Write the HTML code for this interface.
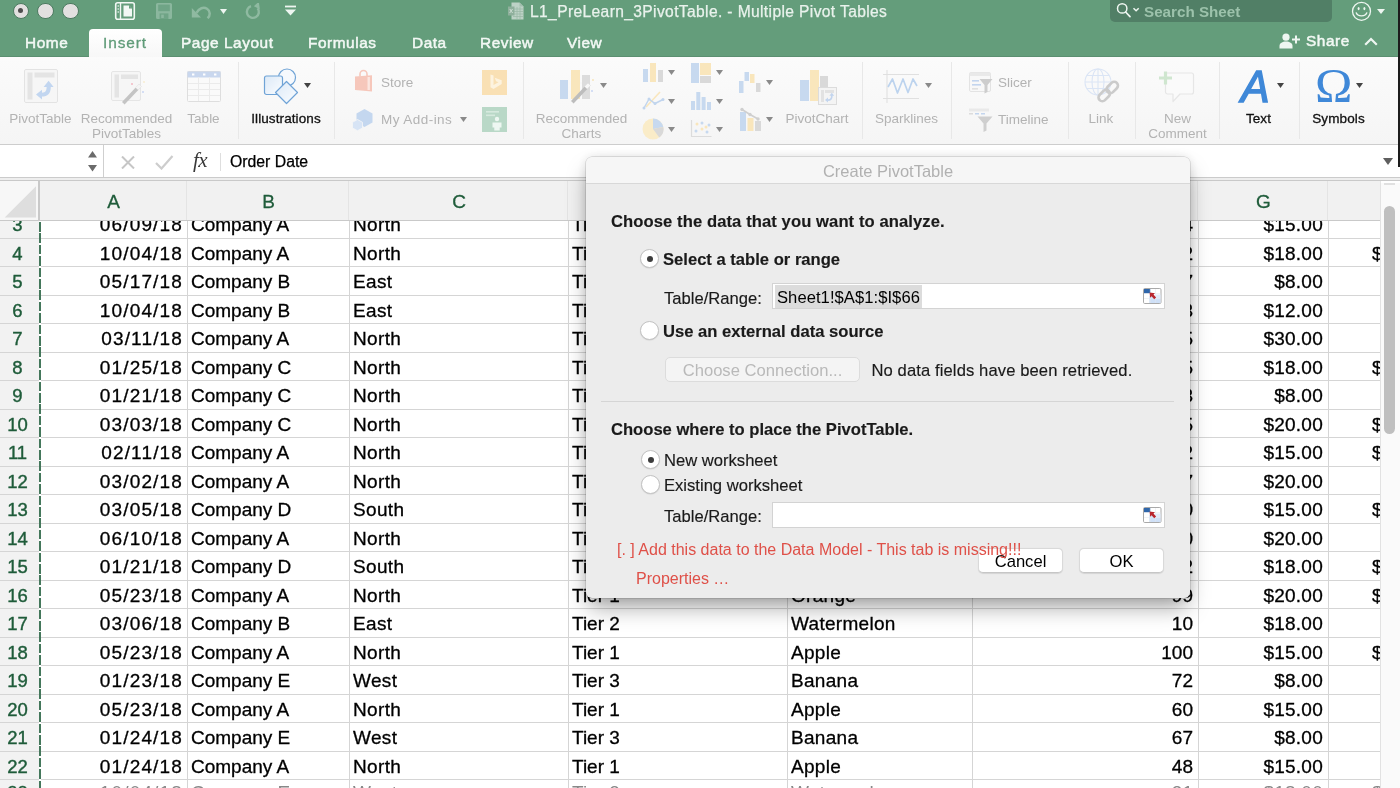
<!DOCTYPE html>
<html lang="en">
<head>
<meta charset="utf-8">
<title>L1_PreLearn_3PivotTable. - Multiple Pivot Tables</title>
<style>
*{box-sizing:border-box;margin:0;padding:0}
html,body{width:1400px;height:788px;overflow:hidden;background:#fff}
#grid,#colhdr,#top,#ribbon,#fbar,#dlg{will-change:transform}
body{position:relative;font-family:"Liberation Sans",sans-serif;color:#000}
.abs{position:absolute}
/* ---------- grid ---------- */
#grid{position:absolute;left:0;top:0;width:1400px;height:788px;overflow:hidden;background:#fff}
.row{position:absolute;left:0;width:1381px;height:28.5px;border-bottom:1px solid #d5d5d5;font-size:19px;line-height:30px;white-space:nowrap;-webkit-text-stroke:.3px #000}
.row span{position:absolute;top:0;height:28px}
.rn{left:0;width:35px;text-align:center;color:#1f5c3a;font-size:18.5px;height:28.5px!important;-webkit-text-stroke:.4px #1f5c3a}
.c{padding:0 4px;overflow:hidden}
.r{text-align:right}
.ca{left:39px;width:148px;letter-spacing:1.15px}
.cb{left:187px;width:162px}
.cc{left:349px;width:219px;letter-spacing:.35px}
.cd{left:568px;width:219px}
.ce{left:787px;width:185px;letter-spacing:.3px}
.cf{left:972px;width:226px;padding-right:5px}
.cg{left:1198px;width:130px;padding-right:5px;letter-spacing:.25px}
.ch{left:1328px;width:53px;text-align:left;padding-left:44px}
.vl{position:absolute;top:221px;width:1px;height:567px;background:#d5d5d5}
#rowhdr{position:absolute;left:0;top:221px;width:39px;height:567px;background:#f2f2f2}
#ants{position:absolute;left:39.2px;top:222px;width:1.7px;height:567px;background:repeating-linear-gradient(180deg,#44775b 0 9.6px,#fff 9.6px 11.4px)}
/* ---------- column header ---------- */
#colhdr{position:absolute;left:0;top:180px;width:1381px;height:41px;background:#f1f1f1;border-bottom:1px solid #c9c9c9}
#colhdr span{position:absolute;top:0;height:40px;line-height:43px;text-align:center;font-size:19px;color:#1f5c3a;border-right:1px solid #e4e4e4;-webkit-text-stroke:.3px #1f5c3a;padding-left:2px}
#corner{position:absolute;left:0;top:181px;width:38px;height:39px;background:#f7f7f7}
#cornerline{position:absolute;left:38px;top:180px;width:1.5px;height:41px;background:#c9c9c9}

/* ---------- top chrome ---------- */
#top{position:absolute;left:0;top:0;width:1400px;height:57px;background:#649d7b;border-bottom:1px solid #5b8f71}
.tl{position:absolute;top:2.8px;width:16.5px;height:16.5px;border-radius:50%;background:#e2e0e0;border:1.2px solid #4c7a60}
.tl i{position:absolute;left:4.45px;top:4.45px;width:5.2px;height:5.2px;border-radius:50%;background:#4d4d4d}
#title{position:absolute;left:530px;top:2px;font-size:15.6px;line-height:20px;color:#e9f2ec;white-space:nowrap;letter-spacing:.37px;-webkit-text-stroke:.25px #e9f2ec}
#search{position:absolute;left:1110px;top:-4px;width:222px;height:26px;border-radius:5px;background:#517f66}
#search span{position:absolute;left:34px;top:6px;font-size:15.200px;line-height:20px;font-weight:700;color:#9cc2ab;white-space:nowrap}
#tabIns{position:absolute;left:89px;top:29px;width:73px;height:29px;border-radius:4px 4px 0 0;background:linear-gradient(#fff,#f7f7f7)}
.tab{position:absolute;top:31.5px;font-size:15.4px;line-height:22px;color:#f2f8f4;white-space:nowrap;-webkit-text-stroke:.5px #f2f8f4;letter-spacing:.55px}
#edge{z-index:5;position:absolute;left:1397.5px;top:0;width:2.5px;height:167px;background:#1c1c1c}
/* ---------- ribbon ---------- */
#ribbon{position:absolute;left:0;top:57px;width:1400px;height:88px;background:linear-gradient(#fbfbfb,#f5f5f5);border-bottom:1.500px solid #cdcdcd}
.sep{position:absolute;top:5px;width:1px;height:77px;background:#e8e8e8}
.lbl{position:absolute;margin-top:1px;font-size:13.500px;line-height:15px;color:#b3b3b3;text-align:center;white-space:nowrap;font-style:normal}
.lbl.l{text-align:left}
.lbl.on{color:#111;-webkit-text-stroke:.3px #111;font-size:13.5px;letter-spacing:.1px}
#bigA{left:1241px;top:5px;font:italic 400 45px/50px "Liberation Sans",sans-serif;color:#3f88d8;-webkit-text-stroke:1.5px #3f88d8;transform:scaleX(.95);transform-origin:0 0}
#omega{left:1315px;top:3.5px;font:400 47.5px/50px "Liberation Serif",serif;color:#3f88d8;transform:scaleX(1.06);transform-origin:0 0}
/* ---------- formula bar ---------- */
#fbar{position:absolute;left:0;top:145px;width:1400px;height:32.5px;background:#fff}
#fx{position:absolute;left:193px;top:3px;font:italic 400 21px/24px "Liberation Serif",serif;color:#3a3a3a;letter-spacing:-.5px}
#fval{position:absolute;left:230px;top:7px;font-size:15.800px;line-height:20px;white-space:nowrap;-webkit-text-stroke:.25px #000}
#fline{position:absolute;left:0;top:177px;width:1400px;height:4px;background:#eee;border-top:1.5px solid #cbcbcb;border-bottom:1px solid #c9c9c9}
/* ---------- dialog ---------- */
#dlg{position:absolute;left:586px;top:157px;width:604px;height:441px;border-radius:6px;background:#ececec;box-shadow:0 0 0 .5px rgba(0,0,0,.2),0 12px 22px -3px rgba(0,0,0,.36),0 0 11px rgba(0,0,0,.11);font-size:16.600px}
#dtitle{position:absolute;left:0;top:0;width:604px;height:27px;border-radius:6px 6px 0 0;background:#f6f6f6;border-bottom:1px solid #d8d8d8;text-align:center;line-height:28px;font-size:16.500px;color:#b1b1b1;padding-left:0}
.dt{position:absolute;margin-top:.8px;line-height:22px;white-space:nowrap;color:#1a1a1a;-webkit-text-stroke:.15px #1a1a1a}
.dt.b{font-weight:700}
.radio{position:absolute;width:19px;height:19px;border-radius:50%;background:#fff;border:1px solid #c3c3c3;box-shadow:0 .5px 1px rgba(0,0,0,.12)}
.radio b{position:absolute;left:5.500px;top:5.500px;width:6px;height:6px;border-radius:50%;background:#3c3c3c}
.inp{position:absolute;width:393px;height:26px;background:#fff;border:1px solid #d3d3d3;line-height:24px;white-space:nowrap}
.inp .sel{position:absolute;left:2px;top:1px;height:23px;line-height:25px;padding:0 2px;background:#dcdcdc;letter-spacing:.05px}
.ric{position:absolute;right:2.5px;top:4px}
.btn{position:absolute;height:24.5px;border-radius:5px;background:#fff;border:1px solid #d9d9d9;border-bottom-color:#c6c6c6;text-align:center;line-height:25.5px;white-space:nowrap;box-shadow:0 .5px 1px rgba(0,0,0,.1)}
.btn.dis{background:#f4f4f4;color:#b9b9b9;border-color:#dcdcdc;box-shadow:none}
.red{position:absolute;font-size:16px;line-height:20px;color:#df5048;white-space:nowrap}
#vscroll{position:absolute;left:1380px;top:183px;width:20px;height:605px;background:#fafafa;border-left:1px solid #e2e2e2}
#vscroll i{position:absolute;left:3px;top:23px;width:11px;height:228px;border-radius:6px;background:#bfbfbf}
#vscroll b{position:absolute;left:3px;top:0;width:11px;height:2px;background:#e0e0e0}
</style>
</head>
<body>
<div id="grid">
<div id="rowhdr"></div>

<div class="row" style="top:210.0px"><span class="rn">3</span><span class="c ca r">06/09/18</span><span class="c cb">Company A</span><span class="c cc">North</span><span class="c cd">Tier 1</span><span class="c ce">Apple</span><span class="c cf r">24</span><span class="c cg r">$15.00</span><span class="c ch r2"></span></div>
<div class="row" style="top:238.5px"><span class="rn">4</span><span class="c ca r">10/04/18</span><span class="c cb">Company A</span><span class="c cc">North</span><span class="c cd">Tier 1</span><span class="c ce">Orange</span><span class="c cf r">82</span><span class="c cg r">$18.00</span><span class="c ch r2">$</span></div>
<div class="row" style="top:267.0px"><span class="rn">5</span><span class="c ca r">05/17/18</span><span class="c cb">Company B</span><span class="c cc">East</span><span class="c cd">Tier 2</span><span class="c ce">Banana</span><span class="c cf r">37</span><span class="c cg r">$8.00</span><span class="c ch r2"></span></div>
<div class="row" style="top:295.5px"><span class="rn">6</span><span class="c ca r">10/04/18</span><span class="c cb">Company B</span><span class="c cc">East</span><span class="c cd">Tier 2</span><span class="c ce">Mango</span><span class="c cf r">43</span><span class="c cg r">$12.00</span><span class="c ch r2"></span></div>
<div class="row" style="top:324.0px"><span class="rn">7</span><span class="c ca r">03/11/18</span><span class="c cb">Company A</span><span class="c cc">North</span><span class="c cd">Tier 1</span><span class="c ce">Cherry</span><span class="c cf r">25</span><span class="c cg r">$30.00</span><span class="c ch r2"></span></div>
<div class="row" style="top:352.5px"><span class="rn">8</span><span class="c ca r">01/25/18</span><span class="c cb">Company C</span><span class="c cc">North</span><span class="c cd">Tier 1</span><span class="c ce">Orange</span><span class="c cf r">95</span><span class="c cg r">$18.00</span><span class="c ch r2">$</span></div>
<div class="row" style="top:381.0px"><span class="rn">9</span><span class="c ca r">01/21/18</span><span class="c cb">Company C</span><span class="c cc">North</span><span class="c cd">Tier 1</span><span class="c ce">Banana</span><span class="c cf r">83</span><span class="c cg r">$8.00</span><span class="c ch r2"></span></div>
<div class="row" style="top:409.5px"><span class="rn">10</span><span class="c ca r">03/03/18</span><span class="c cb">Company C</span><span class="c cc">North</span><span class="c cd">Tier 1</span><span class="c ce">Orange</span><span class="c cf r">55</span><span class="c cg r">$20.00</span><span class="c ch r2">$</span></div>
<div class="row" style="top:438.0px"><span class="rn">11</span><span class="c ca r">02/11/18</span><span class="c cb">Company A</span><span class="c cc">North</span><span class="c cd">Tier 1</span><span class="c ce">Apple</span><span class="c cf r">92</span><span class="c cg r">$15.00</span><span class="c ch r2">$</span></div>
<div class="row" style="top:466.5px"><span class="rn">12</span><span class="c ca r">03/02/18</span><span class="c cb">Company A</span><span class="c cc">North</span><span class="c cd">Tier 1</span><span class="c ce">Orange</span><span class="c cf r">27</span><span class="c cg r">$20.00</span><span class="c ch r2"></span></div>
<div class="row" style="top:495.0px"><span class="rn">13</span><span class="c ca r">03/05/18</span><span class="c cb">Company D</span><span class="c cc">South</span><span class="c cd">Tier 3</span><span class="c ce">Apple</span><span class="c cf r">90</span><span class="c cg r">$15.00</span><span class="c ch r2">$</span></div>
<div class="row" style="top:523.5px"><span class="rn">14</span><span class="c ca r">06/10/18</span><span class="c cb">Company A</span><span class="c cc">North</span><span class="c cd">Tier 1</span><span class="c ce">Orange</span><span class="c cf r">40</span><span class="c cg r">$20.00</span><span class="c ch r2"></span></div>
<div class="row" style="top:552.0px"><span class="rn">15</span><span class="c ca r">01/21/18</span><span class="c cb">Company D</span><span class="c cc">South</span><span class="c cd">Tier 3</span><span class="c ce">Watermelon</span><span class="c cf r">82</span><span class="c cg r">$18.00</span><span class="c ch r2">$</span></div>
<div class="row" style="top:580.5px"><span class="rn">16</span><span class="c ca r">05/23/18</span><span class="c cb">Company A</span><span class="c cc">North</span><span class="c cd">Tier 1</span><span class="c ce">Orange</span><span class="c cf r">99</span><span class="c cg r">$20.00</span><span class="c ch r2">$</span></div>
<div class="row" style="top:609.0px"><span class="rn">17</span><span class="c ca r">03/06/18</span><span class="c cb">Company B</span><span class="c cc">East</span><span class="c cd">Tier 2</span><span class="c ce">Watermelon</span><span class="c cf r">10</span><span class="c cg r">$18.00</span><span class="c ch r2"></span></div>
<div class="row" style="top:637.5px"><span class="rn">18</span><span class="c ca r">05/23/18</span><span class="c cb">Company A</span><span class="c cc">North</span><span class="c cd">Tier 1</span><span class="c ce">Apple</span><span class="c cf r">100</span><span class="c cg r">$15.00</span><span class="c ch r2">$</span></div>
<div class="row" style="top:666.0px"><span class="rn">19</span><span class="c ca r">01/23/18</span><span class="c cb">Company E</span><span class="c cc">West</span><span class="c cd">Tier 3</span><span class="c ce">Banana</span><span class="c cf r">72</span><span class="c cg r">$8.00</span><span class="c ch r2"></span></div>
<div class="row" style="top:694.5px"><span class="rn">20</span><span class="c ca r">05/23/18</span><span class="c cb">Company A</span><span class="c cc">North</span><span class="c cd">Tier 1</span><span class="c ce">Apple</span><span class="c cf r">60</span><span class="c cg r">$15.00</span><span class="c ch r2"></span></div>
<div class="row" style="top:723.0px"><span class="rn">21</span><span class="c ca r">01/24/18</span><span class="c cb">Company E</span><span class="c cc">West</span><span class="c cd">Tier 3</span><span class="c ce">Banana</span><span class="c cf r">67</span><span class="c cg r">$8.00</span><span class="c ch r2"></span></div>
<div class="row" style="top:751.5px"><span class="rn">22</span><span class="c ca r">01/24/18</span><span class="c cb">Company A</span><span class="c cc">North</span><span class="c cd">Tier 1</span><span class="c ce">Apple</span><span class="c cf r">48</span><span class="c cg r">$15.00</span><span class="c ch r2"></span></div>
<div class="row" style="top:780.0px;line-height:26.5px;color:#888;-webkit-text-stroke:0"><span class="rn">23</span><span class="c ca r">10/04/18</span><span class="c cb">Company E</span><span class="c cc">West</span><span class="c cd">Tier 3</span><span class="c ce">Watermelon</span><span class="c cf r">31</span><span class="c cg r">$18.00</span><span class="c ch r2">$</span></div>
<div class="vl" style="left:187px"></div>
<div class="vl" style="left:349px"></div>
<div class="vl" style="left:568px"></div>
<div class="vl" style="left:787px"></div>
<div class="vl" style="left:972px"></div>
<div class="vl" style="left:1197.5px"></div>
<div class="vl" style="left:1327.5px"></div>
<div id="ants"></div>
</div>
<div id="colhdr">

<span style="left:39px;width:148px">A</span>
<span style="left:187px;width:162px">B</span>
<span style="left:349px;width:219px">C</span>
<span style="left:568px;width:219px">D</span>
<span style="left:787px;width:185px">E</span>
<span style="left:972px;width:226px">F</span>
<span style="left:1198px;width:130px">G</span>
<span style="left:1328px;width:53px"></span>
</div>
<div id="vscroll"><b></b><i></i></div>
<div id="corner"><svg class="abs" style="left:0;top:0" width="38" height="39" viewBox="0 0 38 39"><path d="M36 5.300v31.300h-31.300z" fill="#dedede"/></svg></div><div id="cornerline"></div>
<!-- ================= window chrome ================= -->
<div id="top">
  <div class="tl" style="left:12.8px"><i></i></div>
  <div class="tl" style="left:37.3px"></div>
  <div class="tl" style="left:62.3px"></div>
  <!-- quick access toolbar -->
  <svg class="abs" style="left:114px;top:1px" width="22" height="20" viewBox="0 0 22 20">
    <rect x="1.7" y="1.7" width="18.6" height="16.6" rx="2" fill="none" stroke="#f2f8f4" stroke-width="1.6"/>
    <line x1="6.5" y1="2" x2="6.5" y2="18" stroke="#f2f8f4" stroke-width="1.4"/>
    <path d="M9.5 4.5h5.5l3 3v8h-8.5z" fill="#f2f8f4"/>
    <path d="M15 4.5v3h3z" fill="#649d7b"/>
    <circle cx="4.2" cy="5" r=".8" fill="#f2f8f4"/><circle cx="4.2" cy="8" r=".8" fill="#f2f8f4"/><circle cx="4.2" cy="11" r=".8" fill="#f2f8f4"/>
  </svg>
  <svg class="abs" style="left:155px;top:2px" width="18" height="18" viewBox="0 0 18 18">
    <path d="M1 2.5a1.5 1.5 0 0 1 1.5-1.5h13a1.5 1.5 0 0 1 1.5 1.5v13a1.5 1.5 0 0 1-1.5 1.5h-13a1.5 1.5 0 0 1-1.5-1.5z" fill="#8bb79e"/>
    <rect x="3.2" y="2.6" width="11.6" height="6.6" fill="#6fa486"/>
    <rect x="4.6" y="11.4" width="8.8" height="5.6" fill="#6fa486"/>
    <rect x="6.2" y="12.6" width="2.6" height="3.4" fill="#8bb79e"/>
  </svg>
  <svg class="abs" style="left:191px;top:5px" width="21" height="14" viewBox="0 0 21 14">
    <path d="M.8 3v9.600h9.200z" fill="#8fbaa1"/>
    <path d="M5.500 7.800c2.500-4.500 7-6.200 10.500-4 3.400 2.200 3.600 6.600.6 9.400" fill="none" stroke="#8fbaa1" stroke-width="2.500"/>
  </svg>
  <svg class="abs" style="left:220px;top:9px" width="7" height="5" viewBox="0 0 7 5"><path d="M0 0h7l-3.5 5z" fill="#eef6f1"/></svg>
  <svg class="abs" style="left:244px;top:3px" width="18" height="17" viewBox="0 0 18 17">
    <path d="M9.500 0l-5.500 3.800 5.500 3.800z" fill="#8fbaa1" transform="rotate(-8 9 4) translate(6 -.5)"/>
    <path d="M13.600 5.200a6 6 0 1 1-6.600-2" fill="none" stroke="#8fbaa1" stroke-width="2.400"/>
  </svg>
  <svg class="abs" style="left:285px;top:5px" width="11" height="11" viewBox="0 0 11 11">
    <rect x="0" y="0.6" width="11" height="1.8" fill="#eef6f1"/><path d="M0 4.4h11l-5.500 6z" fill="#eef6f1"/>
  </svg>
  <!-- title -->
  <svg class="abs" style="left:508px;top:2px" width="16" height="18" viewBox="0 0 16 18">
    <path d="M3.500 .5h8l4 4v13h-12z" fill="#bdd2c6"/>
    <path d="M11.500 .5v4h4z" fill="#a2bfae"/>
    <g stroke="#9cbaa8" stroke-width=".8"><line x1="5" y1="7" x2="15" y2="7"/><line x1="5" y1="9.500" x2="15" y2="9.500"/><line x1="5" y1="12" x2="15" y2="12"/><line x1="5" y1="14.500" x2="15" y2="14.500"/><line x1="9" y1="5" x2="9" y2="17"/><line x1="12" y1="5" x2="12" y2="17"/></g>
    <rect x="0" y="4.500" width="6.500" height="9" fill="#8fb09c"/>
    <text x="3.200" y="11.400" font-size="7.500" text-anchor="middle" fill="#dfeae3" font-family="Liberation Sans, sans-serif">x</text>
  </svg>
  <div id="title">L1_PreLearn_3PivotTable. - Multiple Pivot Tables</div>
  <!-- search -->
  <div id="search">
    <svg class="abs" style="left:6px;top:6px" width="26" height="16" viewBox="0 0 26 16">
      <circle cx="6.200" cy="6.400" r="4.700" fill="none" stroke="#eef6f1" stroke-width="1.500"/>
      <line x1="9.600" y1="10" x2="14" y2="14.600" stroke="#eef6f1" stroke-width="1.700" stroke-linecap="round"/>
      <path d="M17.500 6.200l2.600 2.600 2.600-2.600" fill="none" stroke="#eef6f1" stroke-width="1.500"/>
    </svg>
    <span>Search Sheet</span>
  </div>
  <svg class="abs" style="left:1351px;top:1px" width="22" height="22" viewBox="0 0 22 22">
    <circle cx="10.500" cy="10.300" r="9" fill="none" stroke="#eef6f1" stroke-width="1.300"/>
    <ellipse cx="7.600" cy="7.600" rx="1" ry="1.700" fill="#eef6f1"/><ellipse cx="13.400" cy="7.600" rx="1" ry="1.700" fill="#eef6f1"/>
    <path d="M5.200 11.800c1.200 4 9.400 4 10.600 0" fill="none" stroke="#eef6f1" stroke-width="1.300" stroke-linecap="round"/>
  </svg>
  <svg class="abs" style="left:1377px;top:9px" width="8" height="5" viewBox="0 0 8 5"><path d="M0 0h8l-4 5z" fill="#eef6f1"/></svg>
  <!-- tabs -->
  <div id="tabIns"></div>
  <span class="tab" style="left:25px">Home</span>
  <span class="tab" style="left:103px;color:#5f9b78;-webkit-text-stroke:.3px #5f9b78;letter-spacing:.9px">Insert</span>
  <span class="tab" style="left:181px">Page Layout</span>
  <span class="tab" style="left:308px">Formulas</span>
  <span class="tab" style="left:412px">Data</span>
  <span class="tab" style="left:480px">Review</span>
  <span class="tab" style="left:567px">View</span>
  <svg class="abs" style="left:1279px;top:33px" width="22" height="16" viewBox="0 0 22 16">
    <circle cx="7" cy="4.200" r="3.600" fill="#eef6f1"/>
    <path d="M0.500 15.500v-2.500c0-3 3-4.600 6.500-4.600s6.500 1.600 6.500 4.600v2.500z" fill="#eef6f1"/>
    <path d="M17 2.500v8M13 6.500h8" stroke="#eef6f1" stroke-width="2"/>
  </svg>
  <span class="tab" style="left:1306px;top:30.3px">Share</span>
  <svg class="abs" style="left:1364px;top:37px" width="14" height="9" viewBox="0 0 14 9"><path d="M1.200 7.800l5.800-5.800 5.800 5.800" fill="none" stroke="#eef6f1" stroke-width="2.200"/></svg>
</div>
<div id="edge"></div>
<!-- ================= ribbon ================= -->
<div id="ribbon">
  <i class="sep" style="left:238px"></i><i class="sep" style="left:334px"></i><i class="sep" style="left:523px"></i>
  <i class="sep" style="left:862px"></i><i class="sep" style="left:951px"></i><i class="sep" style="left:1068px"></i>
  <i class="sep" style="left:1135px"></i><i class="sep" style="left:1219px"></i><i class="sep" style="left:1299px"></i>

  <!-- PivotTable -->
  <svg class="abs" style="left:24px;top:12px" width="34" height="34" viewBox="0 0 34 34">
    <rect x=".5" y=".5" width="33" height="33" rx="1.500" fill="#f6f6f6" stroke="#e3e3e3"/>
    <rect x="3.500" y="3.500" width="5" height="27" fill="#e4e4e4"/><rect x="10.500" y="3.500" width="20" height="5" fill="#e4e4e4"/>
    <path d="M12 25.500l6-4.800v3c3.800 0 4.600-2.400 4.600-5.700h-3l5-6.200 5 6.200h-2.800c0 6.500-3.200 9.600-8.800 9.600v2.800z" fill="#c2d6f0"/>
  </svg>
  <span class="lbl" style="left:0;width:81px;top:53px">PivotTable</span>
  <!-- Recommended PivotTables -->
  <svg class="abs" style="left:111px;top:14px" width="36" height="34" viewBox="0 0 36 34">
    <rect x=".5" y=".5" width="29" height="29" rx="1.500" fill="#f6f6f6" stroke="#e5e5e5"/>
    <rect x="3.500" y="3.500" width="4.500" height="23" fill="#e4e4e4"/><rect x="10" y="3.500" width="17" height="4.500" fill="#e4e4e4"/>
    <path d="M11 31l17-18 2.600 2.400-17 18z" fill="#c4c4c4"/><path d="M24.500 16.500l3.500-3.500 2.600 2.400-3.500 3.600z" fill="#f4f4f4"/>
    <circle cx="21" cy="13" r="1" fill="#f3b9c2"/><circle cx="32" cy="21" r="1" fill="#c9d6f3"/><circle cx="33" cy="11" r=".8" fill="#f6e3b5"/>
  </svg>
  <span class="lbl" style="left:77px;width:99px;top:53px">Recommended<br>PivotTables</span>
  <!-- Table -->
  <svg class="abs" style="left:187px;top:14px" width="34" height="31" viewBox="0 0 34 31">
    <rect x=".5" y=".5" width="33" height="30" rx="1" fill="#fafafa" stroke="#dedede"/>
    <rect x=".5" y=".5" width="33" height="6" fill="#c9d7ee"/>
    <g fill="#fff"><rect x="5" y="2.500" width="2.400" height="2"/><rect x="16" y="2.500" width="2.400" height="2"/><rect x="27" y="2.500" width="2.400" height="2"/></g>
    <g stroke="#ebebeb" stroke-width="1"><line x1="11.500" y1="6" x2="11.500" y2="30"/><line x1="22.500" y1="6" x2="22.500" y2="30"/><line x1="1" y1="12.500" x2="33" y2="12.500"/><line x1="1" y1="18.500" x2="33" y2="18.500"/><line x1="1" y1="24.500" x2="33" y2="24.500"/></g>
  </svg>
  <span class="lbl" style="left:178px;width:51px;top:53px">Table</span>
  <!-- Illustrations -->
  <svg class="abs" style="left:263px;top:10px" width="36" height="38" viewBox="0 0 36 38">
    <defs><linearGradient id="gi" x1="0" y1="0" x2="1" y2="1"><stop offset="0" stop-color="#dce9f7"/><stop offset="1" stop-color="#fbfdff"/></linearGradient></defs>
    <circle cx="24" cy="10.500" r="8.500" fill="#f6f9fd" stroke="#6fa3d6" stroke-width="1.200"/>
    <rect x="1.500" y="9" width="18" height="18.500" rx="2" fill="url(#gi)" stroke="#6fa3d6" stroke-width="1.200"/>
    <path d="M12.500 25.500l11-11 11 11-11 11z" fill="url(#gi)" stroke="#6fa3d6" stroke-width="1.200" stroke-linejoin="round"/>
  </svg>
  <svg class="abs dd" style="left:304px;top:26px" width="7" height="5" viewBox="0 0 7 5"><path d="M0 0h7l-3.500 5z" fill="#444"/></svg>
  <span class="lbl on" style="left:240px;width:92px;top:53px">Illustrations</span>
  <!-- Store / add-ins -->
  <svg class="abs" style="left:354px;top:12px" width="20" height="24" viewBox="0 0 20 24">
    <path d="M6 7.500v-2.500a3.500 3.500 0 0 1 7 0v2.500" fill="none" stroke="#f6c7bb" stroke-width="1.600"/>
    <path d="M1 7.500l17-1.200v16.200l-17-1.600z" fill="#f6c7bb"/><rect x="13.500" y="8" width="2.400" height="13" fill="#fbe6e0"/>
  </svg>
  <span class="lbl l" style="left:381px;top:17px">Store</span>
  <svg class="abs" style="left:352px;top:51px" width="22" height="23" viewBox="0 0 22 23">
    <path d="M12.500 1l8 4.500v9l-8 4.500-8-4.500v-9z" fill="#c4d7ef"/>
    <path d="M5.500 11.500l5 2.800v5.600l-5 2.800-5-2.800v-5.600z" fill="#d7e4f5" stroke="#f6f6f6" stroke-width=".8"/>
  </svg>
  <span class="lbl l" style="left:381px;top:54px;letter-spacing:.45px">My Add-ins</span>
  <svg class="abs dd" style="left:460px;top:60px" width="7" height="5" viewBox="0 0 7 5"><path d="M0 0h7l-3.500 5z" fill="#8a8a8a"/></svg>
  <svg class="abs" style="left:482px;top:13px" width="25" height="25" viewBox="0 0 25 25">
    <rect width="25" height="25" fill="#f9e0b4"/><path d="M8.500 4.500l3 1v9.500l5-2.700-2.400-1.100-1.400-3.400 7 2.500v3.800l-8.200 4.800-3-1.700z" fill="#fdf3df"/>
  </svg>
  <svg class="abs" style="left:482px;top:50px" width="25" height="25" viewBox="0 0 25 25">
    <rect width="25" height="25" fill="#b9d8c7"/><rect x="4" y="4" width="13" height="1.600" fill="#d6e9de"/><rect x="4" y="7.500" width="9" height="1.600" fill="#d6e9de"/>
    <circle cx="15" cy="12" r="2.200" fill="#eef7f2"/><path d="M10.500 15.500h9v5h-1.800v3h-5.400v-3h-1.800z" fill="#eef7f2"/>
  </svg>
  <!-- Recommended Charts -->
  <svg class="abs" style="left:559px;top:12px" width="37" height="35" viewBox="0 0 37 35">
    <rect x="1" y="11" width="8" height="19" fill="#c7d9ef"/><rect x="12" y="1" width="9" height="29" fill="#f9e6bc"/><rect x="23" y="6" width="8" height="24" fill="#dcdcdc"/>
    <path d="M12 32l17-18 2.600 2.400-17 18z" fill="#bdbdbd"/><path d="M25.500 17.500l3.500-3.500 2.600 2.400-3.500 3.600z" fill="#f7f7f7"/>
    <circle cx="22" cy="14" r="1" fill="#f6f6f6"/><circle cx="33" cy="22" r="1" fill="#c9d6f3"/><circle cx="34" cy="11" r=".9" fill="#f6e3b5"/>
  </svg>
  <svg class="abs dd" style="left:600px;top:26px" width="7" height="5" viewBox="0 0 7 5"><path d="M0 0h7l-3.500 5z" fill="#8a8a8a"/></svg>
  <span class="lbl" style="left:532px;width:99px;top:53px">Recommended<br>Charts</span>
  <!-- small chart icons col 1 -->
  <svg class="abs" style="left:643px;top:6px" width="21" height="19" viewBox="0 0 21 19"><rect x="0" y="6" width="5" height="13" fill="#c7d9ef"/><rect x="7" y="0" width="6" height="19" fill="#f9e6bc"/><rect x="15" y="7" width="5" height="12" fill="#d9d9d9"/></svg>
  <svg class="abs" style="left:642px;top:33px" width="23" height="21" viewBox="0 0 23 21"><path d="M4 17l14-15" stroke="#f9e6bc" stroke-width="1.600" fill="none"/><path d="M2 18l5-9 6 4.500 8-4" stroke="#c1d5ee" stroke-width="1.500" fill="none"/><g fill="#c1d5ee"><circle cx="2" cy="18" r="1.500"/><circle cx="7" cy="9" r="1.500"/><circle cx="13" cy="13.500" r="1.500"/><circle cx="21" cy="9.500" r="1.500"/></g></svg>
  <svg class="abs" style="left:642px;top:61px" width="22" height="22" viewBox="0 0 22 22"><circle cx="11" cy="11" r="10.500" fill="#faecc8"/><path d="M11 11V.5a10.500 10.500 0 0 1 10.300 8.500z" fill="#c7d9ef"/><path d="M11 11l10.300-2a10.500 10.500 0 0 1-4 10.500z" fill="#d9d9d9"/></svg>
  <svg class="abs dd" style="left:668px;top:13px" width="7" height="5" viewBox="0 0 7 5"><path d="M0 0h7l-3.500 5z" fill="#8a8a8a"/></svg>
  <svg class="abs dd" style="left:668px;top:42px" width="7" height="5" viewBox="0 0 7 5"><path d="M0 0h7l-3.500 5z" fill="#8a8a8a"/></svg>
  <svg class="abs dd" style="left:668px;top:70px" width="7" height="5" viewBox="0 0 7 5"><path d="M0 0h7l-3.500 5z" fill="#8a8a8a"/></svg>
  <!-- col 2 -->
  <svg class="abs" style="left:691px;top:6px" width="20" height="20" viewBox="0 0 20 20"><rect x="0" y="0" width="8" height="20" fill="#c7d9ef"/><rect x="9" y="0" width="11" height="12" fill="#f9e6bc"/><rect x="9" y="13" width="11" height="7" fill="#d9d9d9"/></svg>
  <svg class="abs" style="left:691px;top:35px" width="20" height="18" viewBox="0 0 20 18"><g fill="#c7d9ef"><rect x="0" y="9" width="4" height="9"/><rect x="5.300" y="0" width="4" height="18"/><rect x="10.600" y="5" width="4" height="13"/><rect x="16" y="10" width="4" height="8"/></g></svg>
  <svg class="abs" style="left:690px;top:63px" width="22" height="18" viewBox="0 0 22 18"><path d="M1.500 0v16.500h20" fill="none" stroke="#dcdcdc" stroke-width="1.200"/><g fill="#c7d9ef"><circle cx="6" cy="11" r="1.500"/><circle cx="12" cy="3" r="1.500"/><circle cx="17" cy="12" r="1.500"/><circle cx="19" cy="5" r="1.500"/></g><g fill="#f9e6bc"><circle cx="7" cy="4" r="1.500"/><circle cx="12" cy="9" r="1.500"/><circle cx="16" cy="7" r="1.500"/></g></svg>
  <svg class="abs dd" style="left:716px;top:13px" width="7" height="5" viewBox="0 0 7 5"><path d="M0 0h7l-3.500 5z" fill="#8a8a8a"/></svg>
  <svg class="abs dd" style="left:716px;top:42px" width="7" height="5" viewBox="0 0 7 5"><path d="M0 0h7l-3.500 5z" fill="#8a8a8a"/></svg>
  <svg class="abs dd" style="left:716px;top:70px" width="7" height="5" viewBox="0 0 7 5"><path d="M0 0h7l-3.500 5z" fill="#8a8a8a"/></svg>
  <!-- col 3 -->
  <svg class="abs" style="left:739px;top:15px" width="23" height="21" viewBox="0 0 23 21"><rect x="0" y="9" width="4.500" height="12" fill="#c7d9ef"/><rect x="5.500" y="0" width="4.500" height="9" fill="#c7d9ef"/><rect x="11" y="2" width="4.500" height="9" fill="#f9e6bc"/><rect x="17" y="11" width="4.500" height="9" fill="#d9d9d9"/></svg>
  <svg class="abs" style="left:739px;top:50px" width="23" height="24" viewBox="0 0 23 24"><rect x="1" y="5" width="6" height="19" fill="#c7d9ef"/><rect x="8.500" y="11" width="6" height="13" fill="#f9e6bc"/><rect x="16" y="14" width="6" height="10" fill="#d9d9d9"/><path d="M3 2.500l8 5 8 4.500" stroke="#cfcfcf" stroke-width="1.600" fill="none"/><g fill="#cfcfcf"><circle cx="3" cy="2.500" r="1.700"/><circle cx="11" cy="7.500" r="1.700"/><circle cx="19" cy="12" r="1.700"/></g></svg>
  <svg class="abs dd" style="left:766px;top:23px" width="7" height="5" viewBox="0 0 7 5"><path d="M0 0h7l-3.500 5z" fill="#8a8a8a"/></svg>
  <svg class="abs dd" style="left:766px;top:60px" width="7" height="5" viewBox="0 0 7 5"><path d="M0 0h7l-3.500 5z" fill="#8a8a8a"/></svg>
  <!-- PivotChart -->
  <svg class="abs" style="left:800px;top:12px" width="38" height="37" viewBox="0 0 38 37">
    <rect x="0" y="11" width="9" height="21" fill="#c7d9ef"/><rect x="10" y="1" width="9" height="31" fill="#f9e6bc"/><rect x="20" y="7" width="8" height="12" fill="#d9d9d9"/>
    <rect x="18.500" y="18.500" width="18" height="17" fill="#f4f4f4" stroke="#dcdcdc"/><rect x="21" y="21" width="3" height="12" fill="#e2e2e2"/><rect x="25" y="21" width="9" height="3" fill="#e2e2e2"/>
    <path d="M25 31l3-2.400v1.600c2.400 0 3-1.500 3-3.500h-1.600l2.400-3 2.400 3h-1.500c0 3.500-1.700 5.300-4.700 5.300v1.400z" fill="#c3d5ee"/>
  </svg>
  <span class="lbl" style="left:777px;width:80px;top:53px">PivotChart</span>
  <!-- Sparklines -->
  <svg class="abs" style="left:883px;top:13px" width="37" height="33" viewBox="0 0 37 33">
    <path d="M4 0v33M0 4.500h36M0 28.500h36" stroke="#e0e0e0" stroke-width="1.100" fill="none"/>
    <path d="M5 17l4.500-8 5 14 5.500-14 5 13.500 5-13.500 4 7" stroke="#bcd3ee" stroke-width="1.700" fill="none" stroke-linejoin="round"/>
  </svg>
  <svg class="abs dd" style="left:925px;top:26px" width="7" height="5" viewBox="0 0 7 5"><path d="M0 0h7l-3.500 5z" fill="#8a8a8a"/></svg>
  <span class="lbl" style="left:866px;width:81px;top:53px">Sparklines</span>
  <!-- Slicer / Timeline -->
  <svg class="abs" style="left:969px;top:15px" width="24" height="22" viewBox="0 0 24 22">
    <rect x=".5" y=".5" width="21" height="19" rx="1.500" fill="#f8f8f8" stroke="#e3e3e3"/><rect x=".5" y=".5" width="21" height="3.500" fill="#e9e9e9"/>
    <rect x="3" y="8" width="7" height="1.600" fill="#c3d5ee"/><rect x="3" y="12" width="9" height="1.600" fill="#c3d5ee"/><rect x="3" y="16" width="6" height="1.600" fill="#e0e0e0"/>
    <path d="M10.500 7h13l-5 6v7l-3 1.500v-8.500z" fill="#cdcdcd"/>
  </svg>
  <span class="lbl l" style="left:998px;top:17px">Slicer</span>
  <svg class="abs" style="left:968px;top:51px" width="26" height="24" viewBox="0 0 26 24">
    <rect x="1" y=".5" width="20" height="3" fill="#e9e9e9"/><rect x="1" y="5" width="4" height="1.500" fill="#dcdcdc"/><rect x="7" y="5" width="4" height="1.500" fill="#c3d5ee"/><rect x="13" y="5" width="4" height="1.500" fill="#c3d5ee"/>
    <path d="M9.500 8.500h15l-6 7v7l-3 1.500v-8.500z" fill="#cfcfcf"/>
  </svg>
  <span class="lbl l" style="left:998px;top:54px">Timeline</span>
  <!-- Link -->
  <svg class="abs" style="left:1084px;top:11px" width="38" height="37" viewBox="0 0 38 37">
    <g fill="none" stroke="#dbe5f5" stroke-width="1.100"><circle cx="14" cy="14" r="13"/><ellipse cx="14" cy="14" rx="6" ry="13"/><path d="M1 14h26M14 1v26M3 7.500h22M3 20.500h22"/></g>
    <g fill="none" stroke="#cbcbcb" stroke-width="2.700" stroke-linecap="round"><rect x="24.500" y="13" width="7.500" height="13" rx="3.750" transform="rotate(45 28.250 19.500)"/><rect x="16.500" y="21" width="7.500" height="13" rx="3.750" transform="rotate(45 20.250 27.500)"/></g>
  </svg>
  <span class="lbl" style="left:1070px;width:62px;top:53px">Link</span>
  <!-- New Comment -->
  <svg class="abs" style="left:1157px;top:13px" width="39" height="34" viewBox="0 0 39 34">
    <path d="M8.500 3h26a2 2 0 0 1 2 2v17a2 2 0 0 1-2 2h-11.500l-7 7.500v-7.500h-5.500a2 2 0 0 1-2-2z" fill="#fafafa" stroke="#e6e6e6" stroke-width="1.200" stroke-linejoin="round"/>
    <path d="M8.500 1.500v13M2 8h13" stroke="#cfe6cf" stroke-width="3.200"/>
  </svg>
  <span class="lbl" style="left:1138px;width:79px;top:53px">New<br>Comment</span>
  <!-- Text -->
  <span class="abs" id="bigA">A</span>
  <svg class="abs dd" style="left:1277px;top:26px" width="7" height="5" viewBox="0 0 7 5"><path d="M0 0h7l-3.500 5z" fill="#444"/></svg>
  <span class="lbl on" style="left:1222px;width:73px;top:53px">Text</span>
  <!-- Symbols -->
  <span class="abs" id="omega">&#937;</span>
  <svg class="abs dd" style="left:1356px;top:26px" width="7" height="5" viewBox="0 0 7 5"><path d="M0 0h7l-3.500 5z" fill="#444"/></svg>
  <span class="lbl on" style="left:1300px;width:77px;top:53px">Symbols</span>
</div>
<!-- ================= formula bar ================= -->
<div id="fbar">
  <svg class="abs" style="left:88px;top:6px" width="9" height="21" viewBox="0 0 9 21"><path d="M0 6.500h9l-4.500-6.500zM0 14h9l-4.500 6.500z" fill="#6b6b6b"/></svg>
  <i class="abs" style="left:103px;top:0;width:1px;height:33px;background:#cfcfcf"></i>
  <svg class="abs" style="left:121px;top:11px" width="14" height="13" viewBox="0 0 14 13"><path d="M1 .500l12 12M13 .500l-12 12" stroke="#c6c6c6" stroke-width="2"/></svg>
  <svg class="abs" style="left:155px;top:10px" width="19" height="15" viewBox="0 0 19 15"><path d="M1 8l5.500 5.500 11-12.500" stroke="#cdcdcd" stroke-width="2.200" fill="none"/></svg>
  <span id="fx">fx</span>
  <i class="abs" style="left:220px;top:8px;width:1px;height:18px;background:#dedede"></i>
  <span id="fval">Order Date</span>
  <svg class="abs" style="left:1383px;top:13px" width="10" height="7" viewBox="0 0 10 7"><path d="M0 0h10l-5 7z" fill="#5f5f5f"/></svg>
</div>
<div id="fline"></div>
<!-- ================= dialog ================= -->
<div id="dlg">
  <div id="dtitle">Create PivotTable</div>
  <div class="dt b" style="left:25px;top:53px;letter-spacing:.09px">Choose the data that you want to analyze.</div>
  <i class="radio" style="left:54px;top:92px"><b></b></i>
  <div class="dt b" style="left:77px;top:91px">Select a table or range</div>
  <div class="dt" style="left:78px;top:130px">Table/Range:</div>
  <div class="inp" style="left:186px;top:126px"><span class="sel">Sheet1!$A$1:$I$66</span>
    <svg class="ric" width="18.500" height="16" viewBox="0 0 18.500 16"><rect x=".5" y=".5" width="17.500" height="15" rx="1.200" fill="#fff" stroke="#a9a9a9"/><rect x="1" y="1" width="6.300" height="4.300" fill="#2f66aa"/><path d="M6.300 8h4v2.500h7.200v4.500h-11.200z" fill="#cfe0f7"/><rect x="12.500" y="6.500" width="5" height="4" fill="#dfeafa"/><path d="M1 5.500h16.500M1 10.500h16.500M7.300 1v14M12.500 1v14" stroke="#e3e6ec" stroke-width=".5"/><path d="M6.600 4.600l5.400.6-1.500 1.400 2.600 2.900-1.900 1.700-2.600-2.900-1.500 1.400z" fill="#b8262e"/></svg>
  </div>
  <i class="radio" style="left:54px;top:164px"></i>
  <div class="dt b" style="left:77px;top:163px">Use an external data source</div>
  <div class="btn dis" style="left:79px;top:200px;width:195px">Choose Connection...</div>
  <div class="dt" style="left:285.5px;top:202px;letter-spacing:.1px">No data fields have been retrieved.</div>
  <i class="abs" style="left:15px;top:244px;width:573px;height:1px;background:#d5d5d5"></i>
  <div class="dt b" style="left:25px;top:261px">Choose where to place the PivotTable.</div>
  <i class="radio" style="left:55px;top:293px"><b></b></i>
  <div class="dt" style="left:78px;top:292px">New worksheet</div>
  <i class="radio" style="left:55px;top:318px"></i>
  <div class="dt" style="left:78px;top:317px">Existing worksheet</div>
  <div class="dt" style="left:78px;top:348px">Table/Range:</div>
  <div class="inp" style="left:186px;top:345px">
    <svg class="ric" width="18.500" height="16" viewBox="0 0 18.500 16"><rect x=".5" y=".5" width="17.500" height="15" rx="1.200" fill="#fff" stroke="#a9a9a9"/><rect x="1" y="1" width="6.300" height="4.300" fill="#2f66aa"/><path d="M6.300 8h4v2.500h7.200v4.500h-11.200z" fill="#cfe0f7"/><rect x="12.500" y="6.500" width="5" height="4" fill="#dfeafa"/><path d="M1 5.500h16.500M1 10.500h16.500M7.300 1v14M12.500 1v14" stroke="#e3e6ec" stroke-width=".5"/><path d="M6.600 4.600l5.400.6-1.500 1.400 2.600 2.900-1.900 1.700-2.600-2.900-1.500 1.400z" fill="#b8262e"/></svg>
  </div>
  <div class="btn" style="left:392px;top:391px;width:85px">Cancel</div>
  <div class="btn" style="left:493px;top:391px;width:85px">OK</div>
  <div class="red" style="left:31px;top:382.7px">[. ] Add this data to the Data Model - This tab is missing!!!</div>
  <div class="red" style="left:50px;top:412px">Properties …</div>
</div>
</body>
</html>
